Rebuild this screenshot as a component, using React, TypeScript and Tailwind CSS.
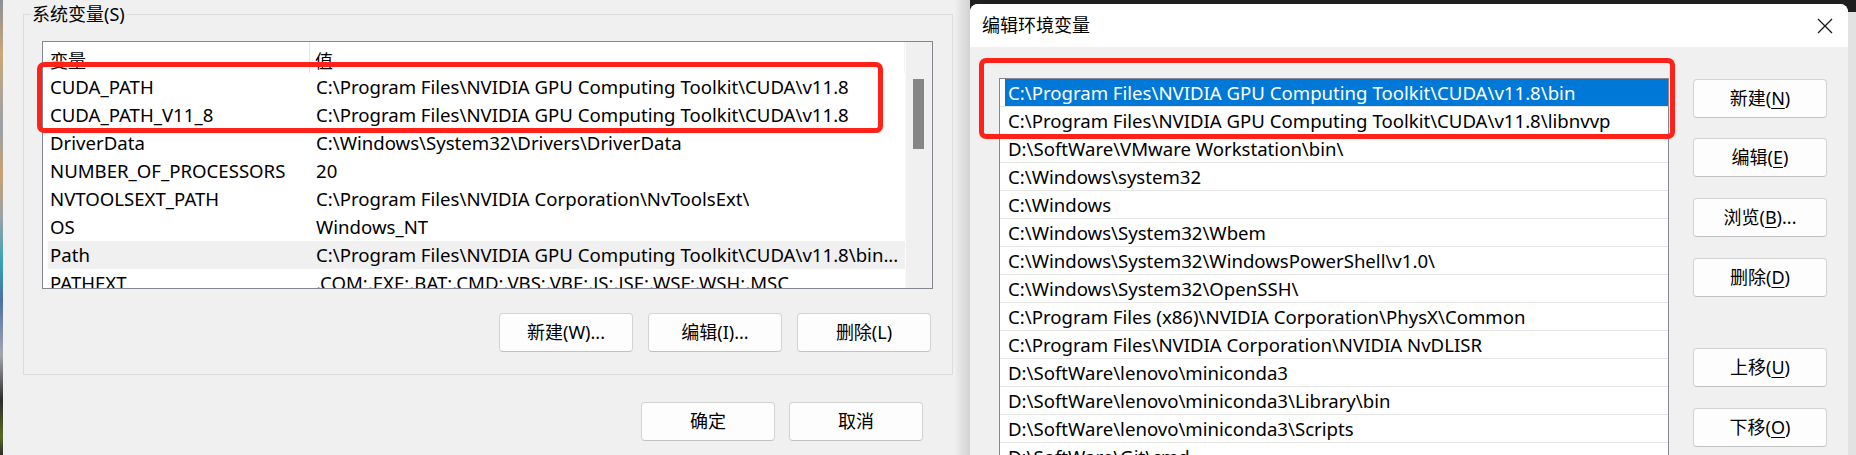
import React from "react"

const sysVars: [string, string][] = [
  ["CUDA_PATH", String.raw`C:\Program Files\NVIDIA GPU Computing Toolkit\CUDA\v11.8`],
  ["CUDA_PATH_V11_8", String.raw`C:\Program Files\NVIDIA GPU Computing Toolkit\CUDA\v11.8`],
  ["DriverData", String.raw`C:\Windows\System32\Drivers\DriverData`],
  ["NUMBER_OF_PROCESSORS", "20"],
  ["NVTOOLSEXT_PATH", String.raw`C:\Program Files\NVIDIA Corporation\NvToolsExt\ `],
  ["OS", "Windows_NT"],
  ["Path", String.raw`C:\Program Files\NVIDIA GPU Computing Toolkit\CUDA\v11.8\bin...`],
  ["PATHEXT", ".COM;.EXE;.BAT;.CMD;.VBS;.VBE;.JS;.JSE;.WSF;.WSH;.MSC"],
]

const pathEntries = [
  String.raw`C:\Program Files\NVIDIA GPU Computing Toolkit\CUDA\v11.8\bin`,
  String.raw`C:\Program Files\NVIDIA GPU Computing Toolkit\CUDA\v11.8\libnvvp`,
  String.raw`D:\SoftWare\VMware Workstation\bin\ `,
  String.raw`C:\Windows\system32`,
  String.raw`C:\Windows`,
  String.raw`C:\Windows\System32\Wbem`,
  String.raw`C:\Windows\System32\WindowsPowerShell\v1.0\ `,
  String.raw`C:\Windows\System32\OpenSSH\ `,
  String.raw`C:\Program Files (x86)\NVIDIA Corporation\PhysX\Common`,
  String.raw`C:\Program Files\NVIDIA Corporation\NVIDIA NvDLISR`,
  String.raw`D:\SoftWare\lenovo\miniconda3`,
  String.raw`D:\SoftWare\lenovo\miniconda3\Library\bin`,
  String.raw`D:\SoftWare\lenovo\miniconda3\Scripts`,
  String.raw`D:\SoftWare\Git\cmd`,
]

function Btn(props: { children: React.ReactNode, className?: string }) {
  return <div className={"flex-none h-[39px] w-[134px] rounded-[4px] border border-[#d3d3d3] border-b-[#c2c2c2] bg-[#fdfdfd] flex items-center justify-center text-[18px] text-black " + (props.className ?? "")}>
    {props.children}
  </div>
}

function Key(props: { k: string }) {
  return <span className="underline underline-offset-[3px] decoration-1">{props.k}</span>
}

function SystemVars() {
  return <div className="flex-none w-[952px] h-full bg-[#f0f0f0] flex flex-col">
    {/* group box */}
    <div className="ml-[20px] mt-[14px] w-[930px] h-[361px] border border-[#dcdcdc] flex flex-col">
      <div className="-mt-[10px] ml-[7px] w-fit px-[1px] bg-[#f0f0f0] text-[18px] leading-[18px] text-black">系统变量(S)</div>

      <div className="ml-[18px] mt-[18px] w-[891px] h-[248px] border border-[#828790] bg-white flex overflow-hidden">
        <div className="w-[862px] flex flex-col">
          <div className="flex-none h-[31px] ml-[5px] flex text-[18px] text-black">
            <div className="w-[262px] pl-[2px] pt-[6px] border-r border-[#e5e5e5]">变量</div>
            <div className="pl-[5px] pt-[6px] flex-1 border-r border-[#f4f4f4]">值</div>
          </div>
          {sysVars.map(([name, value]) =>
            <div key={name} className={"flex-none h-[28px] ml-[5px] flex items-center whitespace-nowrap text-[18.6px] text-black " + (name === "Path" ? "bg-[#f0f0f0]" : "")}>
              <div className="w-[268px] pl-[2px]">{name}</div>
              <div className="truncate">{value}</div>
            </div>)}
        </div>
        <div className="flex-1 bg-[#f0f0f0] border-l border-[#fafafa]">
          <div className="ml-[7px] mt-[37px] w-[11px] h-[70px] bg-[#868686]" />
        </div>
      </div>

      <div className="mt-[24px] pr-[21px] flex justify-end gap-[15px]">
        <Btn>新建(W)...</Btn>
        <Btn>编辑(I)...</Btn>
        <Btn>删除(L)</Btn>
      </div>
    </div>

    <div className="mt-[27px] pr-[32px] flex justify-end gap-[14px]">
      <Btn>确定</Btn>
      <Btn>取消</Btn>
    </div>
  </div>
}

function EditDialog() {
  return <div className="flex-none w-[878px] h-full flex flex-col bg-[#1f1f1f]">
    <div className="mt-[4px] flex-1 rounded-t-[8px] overflow-hidden bg-[#f0f0f0] flex flex-col">
      <div className="flex-none h-[43px] bg-white flex items-center justify-between pl-[12px] pr-[14px]">
        <span className="text-[18px] text-black">编辑环境变量</span>
        <svg width="16" height="16" viewBox="0 0 16 16" className="mr-[1px]">
          <path d="M1 1 L15 15 M15 1 L1 15" stroke="#1a1a1a" strokeWidth="1.3" fill="none" />
        </svg>
      </div>
      <div className="flex-1 flex">
        <div className="ml-[29px] mt-[31px] w-[670px] border-l border-t border-r border-[#828790] bg-white flex flex-col overflow-hidden">
          {pathEntries.map((p, i) =>
            <div key={p} className="flex-none h-[28px] border-b border-[#e6e6e6]">
              <div className={"ml-[5px] h-full pl-[3px] flex items-center whitespace-nowrap text-[18.6px] " + (i === 0 ? "bg-[#0078d7] text-white" : "text-black")}>{p}</div>
            </div>)}
        </div>
        <div className="ml-[24px] mt-[32px] flex flex-col">
          <Btn>新建(<Key k="N" />)</Btn>
          <Btn className="mt-[20px]">编辑(<Key k="E" />)</Btn>
          <Btn className="mt-[21px]">浏览(<Key k="B" />)...</Btn>
          <Btn className="mt-[21px]">删除(<Key k="D" />)</Btn>
          <Btn className="mt-[51px]">上移(<Key k="U" />)</Btn>
          <Btn className="mt-[21px]">下移(<Key k="O" />)</Btn>
        </div>
      </div>
    </div>
  </div>
}

export default function App() {
  return <div className="relative w-[1856px] h-[455px] overflow-hidden flex bg-[#f0f0f0] font-['Noto_Sans','Noto_Sans_CJK_SC',sans-serif]">
    <div className="flex-none w-[3px] h-full bg-[linear-gradient(180deg,#8a9098_0%,#c9a77a_12%,#9aa1a9_28%,#c8a070_38%,#9aa1a9_48%,#35a3b3_58%,#4a6fa8_66%,#a3a7ad_78%,#2c2c2c_88%,#5a6a24_96%,#2c2c2c_100%)]" />
    <SystemVars />
    <div className="flex-none w-[15px] h-full bg-gradient-to-r from-[#eeeeee] to-[#d2d2d2]" />
    <EditDialog />
    <div className="flex-none w-[8px] h-full flex flex-col bg-[#e2e2e2]">
      <div className="h-[12px] bg-[#1f1f1f]" />
    </div>

    {/* annotation boxes */}
    <div className="absolute left-[37px] top-[62px] w-[846px] h-[71px] border-[5px] border-[#ff2218] rounded-[7px]" />
    <div className="absolute left-[979px] top-[58px] w-[696px] h-[81px] border-[5px] border-[#ff2218] rounded-[7px]" />
  </div>
}
